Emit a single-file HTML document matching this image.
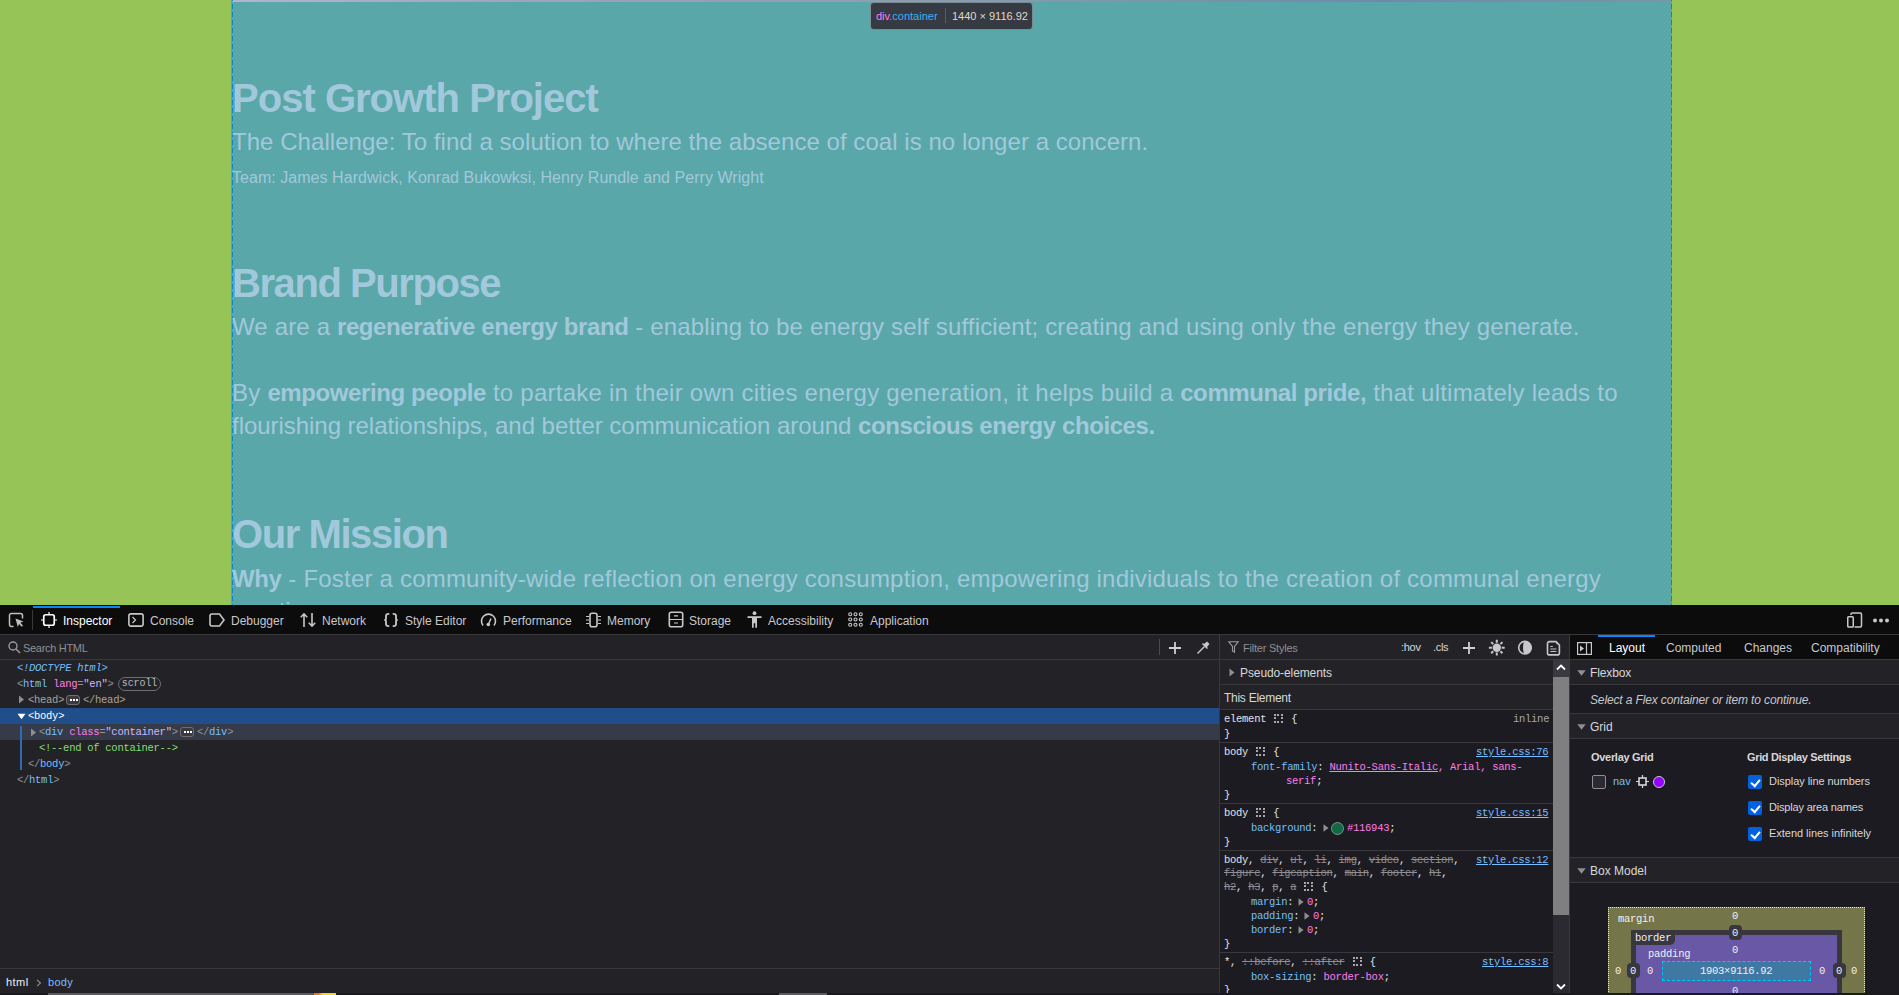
<!DOCTYPE html>
<html lang="en">
<head>
<meta charset="utf-8">
<style>
*{box-sizing:border-box}
html,body{margin:0;padding:0}
body{width:1899px;height:995px;overflow:hidden;position:relative;background:#1c1b22;font-family:"Liberation Sans",sans-serif}
.a{position:absolute;white-space:pre}
#page{position:absolute;left:0;top:0;width:1899px;height:605px;background:#97c457;overflow:hidden}
#cont{position:absolute;left:231px;top:0;width:1441px;height:605px;background:#59a7a8}
#topstrip{position:absolute;left:232px;top:0;width:1439px;height:2px;background:linear-gradient(90deg,#b4b4cc 0%,#a2a4c2 18%,#98a0b6 28%,#8a9cb0 50%,#7892aa 68%,#6e8aa8 80%,#7a94aa 100%)}
.guide{position:absolute;top:0;width:1px;height:605px;background:repeating-linear-gradient(to bottom,#0a84d8 0 1px,transparent 1px 4px,#0a84d8 4px 8px)}
.pg{color:#a2c8dc;font-family:"Liberation Sans",sans-serif}
.pg b{font-weight:700;letter-spacing:-0.4px}
.pg b{}
.h1{font-size:40px;font-weight:700;line-height:46px}
.p24{font-size:24px;line-height:28px}
.p16{font-size:16px;line-height:19px}
#infobar{position:absolute;left:870px;top:2px;width:163px;height:28px;background:#353a43;border:1px solid rgba(200,240,240,0.45);border-radius:4px}

#dt{position:absolute;left:0;top:605px;width:1899px;height:390px;background:#1c1b22}
.tb{position:absolute;left:0;top:0;width:1899px;height:29px;background:#0c0c0d}
.ui{font-family:"Liberation Sans",sans-serif;font-size:12px;line-height:14px;color:#b1b1b3}
.mono{font-family:"Liberation Mono",monospace;font-size:10px;line-height:14px}
.hl{position:absolute;height:1px;background:#38383d}
.vl{position:absolute;width:1px;background:#38383d}
.tab{top:613px;font-size:12px;line-height:16px;color:#c8c8cc;font-family:"Liberation Sans",sans-serif}
.tab.sel{color:#fff}
.mk{font-family:"Liberation Mono",monospace;font-size:10.5px;line-height:16px;letter-spacing:-0.27px;color:#939395}
.pu{color:#939395}.tg{color:#75bfff}.at{color:#ff7de9}.av{color:#d2b8ff}
.badge{font-family:"Liberation Mono",monospace;font-size:10px;line-height:12px;letter-spacing:-0.1px;color:#b8b8bc;border:1px solid #6e6e72;border-radius:7px;text-align:center}
.dots{width:14px;height:10px;border:1px solid #6e6e72;border-radius:3px;background:#3a3a3f}
.dots::after{content:"";position:absolute;left:3px;top:3px;width:2px;height:2px;background:#fff;box-shadow:3px 0 #fff,6px 0 #fff}
.rl{font-family:"Liberation Mono",monospace;font-size:10.5px;line-height:14px;letter-spacing:-0.27px;color:#e3e3e6}
.rl s{color:#8f8f93}
.pn{color:#75bfff}.pv{color:#ff7de9}
.lk{color:#75bfff;text-decoration:underline}
.gi{display:inline-block;width:9px;height:9px;border:2px dotted #a8a8ac;vertical-align:-1px;margin:0 2px}
.cb{width:14px;height:14px;border-radius:2px;background:#0062e0}
.cb::after{content:"";position:absolute;left:3px;top:2px;width:7px;height:4px;border-left:2px solid #fff;border-bottom:2px solid #fff;transform:translate(0,2px) rotate(-50deg)}
.bm{font-family:"Liberation Mono",monospace;font-size:10.5px;line-height:16px;letter-spacing:-0.27px;color:#f0f0f4}
.bbadge{width:13px;height:15px;border-radius:4px;background:#38373d}
</style>
</head>
<body>
<div id="page">
  <div id="cont"></div>
  <div id="topstrip"></div>
  <div class="guide" style="left:232px"></div>
  <div class="guide" style="left:1671px"></div>

  <div class="a pg h1" style="left:232px;top:75px;letter-spacing:-0.98px">Post Growth Project</div>
  <div class="a pg p24" style="left:232px;top:128px;letter-spacing:0.047px">The Challenge: To find a solution to where the absence of coal is no longer a concern.</div>
  <div class="a pg p16" style="left:232px;top:168px;letter-spacing:0.042px">Team: James Hardwick, Konrad Bukowksi, Henry Rundle and Perry Wright</div>

  <div class="a pg h1" style="left:232px;top:260px;letter-spacing:-1.43px">Brand Purpose</div>
  <div class="a pg p24" style="left:232px;top:313px;letter-spacing:0.15px">We are a <b>regenerative energy brand</b> - enabling to be energy self sufficient; creating and using only the energy they generate.</div>
  <div class="a pg p24" style="left:232px;top:379px;letter-spacing:0.242px">By <b>empowering people</b> to partake in their own cities energy generation, it helps build a <b>communal pride,</b> that ultimately leads to</div>
  <div class="a pg p24" style="left:232px;top:412px;letter-spacing:-0.04px">flourishing relationships, and better communication around <b>conscious energy choices.</b></div>

  <div class="a pg h1" style="left:232px;top:511px;letter-spacing:-1.43px">Our Mission</div>
  <div class="a pg p24" style="left:232px;top:565px;letter-spacing:0.205px"><b>Why</b> - Foster a community-wide reflection on energy consumption, empowering individuals to the creation of communal energy</div>
  <div class="a pg p24" style="left:232px;top:597px">practices.</div>

  <div id="infobar"></div>
  <div class="a" style="left:876px;top:10px;font:11px/13px 'Liberation Sans',sans-serif"><span style="color:#ff7de9">div</span><span style="color:#3fb0f0">.container</span></div>
  <div class="a" style="left:945px;top:8px;width:1px;height:15px;background:#5b5e66"></div>
  <div class="a" style="left:952px;top:10px;font:11px/13px 'Liberation Sans',sans-serif;color:#e0d9c8">1440 &#215; 9116.92</div>
</div>

<div id="dt">
  <div class="tb"></div>
  <div class="hl" style="left:0;top:29px;width:1899px"></div>
</div>
<!-- toolbar -->
<div id="toolbar">
  <div class="a" style="left:33px;top:606px;width:87px;height:2px;background:#0a84ff"></div>
  <div class="a" style="left:32px;top:610px;width:1px;height:20px;background:#38383d"></div>
  <!-- pick icon -->
  <svg class="a" style="left:8px;top:612px" width="17" height="16" viewBox="0 0 17 16"><path d="M5.5 14.5H3.5a2 2 0 0 1-2-2V3.5a2 2 0 0 1 2-2h9a2 2 0 0 1 2 2v3" fill="none" stroke="#bfbfc3" stroke-width="1.5"/><path d="M7.5 6.5l8 3-3.2 1.2 2.7 2.8-1.2 1.2-2.8-2.8-1.2 3.2z" fill="#bfbfc3"/></svg>
  <!-- inspector icon -->
  <svg class="a" style="left:41px;top:612px" width="16" height="16" viewBox="0 0 16 16"><rect x="2.75" y="2.75" width="10.5" height="10.5" rx="2" fill="none" stroke="#fff" stroke-width="1.7"/><path d="M8 0v2.5M8 13.5V16M0 8h2.5M13.5 8H16" stroke="#fff" stroke-width="1.2"/></svg>
  <div class="a tab sel" style="left:63px">Inspector</div>
  <svg class="a" style="left:128px;top:613px" width="16" height="14" viewBox="0 0 16 14"><rect x="0.9" y="0.9" width="14.2" height="12.2" rx="2" fill="none" stroke="#c8c8cc" stroke-width="1.6"/><path d="M4.5 4l3 3-3 3" fill="none" stroke="#c8c8cc" stroke-width="1.2"/></svg>
  <div class="a tab" style="left:150px">Console</div>
  <svg class="a" style="left:209px;top:613px" width="16" height="14" viewBox="0 0 16 14"><path d="M1 3a2 2 0 0 1 2-2h7.5l4.5 6-4.5 6H3a2 2 0 0 1-2-2z" fill="none" stroke="#c8c8cc" stroke-width="1.6"/></svg>
  <div class="a tab" style="left:231px">Debugger</div>
  <svg class="a" style="left:300px;top:612px" width="16" height="16" viewBox="0 0 16 16"><path d="M4 15V2M0.8 5.2L4 1.8l3.2 3.4M12 1v13M8.8 10.8l3.2 3.4 3.2-3.4" fill="none" stroke="#c8c8cc" stroke-width="1.6"/></svg>
  <div class="a tab" style="left:322px">Network</div>
  <svg class="a" style="left:380px;top:610px" width="22" height="20" viewBox="0 0 22 20"><path d="M8.6 3.8C7 3.8 6 4.5 6 6V8.4C6 9.3 5.3 9.9 4.3 9.9C5.3 9.9 6 10.5 6 11.4V14C6 15.5 7 16.1 8.6 16.1M13.4 3.8C15 3.8 16 4.5 16 6V8.4C16 9.3 16.7 9.9 17.7 9.9C16.7 9.9 16 10.5 16 11.4V14C16 15.5 15 16.1 13.4 16.1" fill="none" stroke="#c8c8cc" stroke-width="1.8" stroke-linecap="round"/></svg>
  <div class="a tab" style="left:405px">Style Editor</div>
  <svg class="a" style="left:480px;top:612px" width="17" height="16" viewBox="0 0 17 16"><path d="M3 13.5A7 7 0 1 1 14 13.5" fill="none" stroke="#c8c8cc" stroke-width="1.6"/><path d="M8.5 12l2.5-5.5" stroke="#c8c8cc" stroke-width="1.5"/><circle cx="8.3" cy="12.5" r="1.8" fill="#c8c8cc"/></svg>
  <div class="a tab" style="left:503px">Performance</div>
  <svg class="a" style="left:585px;top:612px" width="17" height="16" viewBox="0 0 17 16"><rect x="5" y="1.3" width="7" height="13.4" rx="2" fill="none" stroke="#c8c8cc" stroke-width="1.6"/><path d="M1 4.5h3M1 8h3M1 11.5h3M13 4.5h3M13 8h3M13 11.5h3" stroke="#c8c8cc" stroke-width="1"/></svg>
  <div class="a tab" style="left:607px">Memory</div>
  <svg class="a" style="left:668px;top:611px" width="16" height="17" viewBox="0 0 16 17"><rect x="1.3" y="1.3" width="13.4" height="14.4" rx="2" fill="none" stroke="#c8c8cc" stroke-width="1.6"/><path d="M1.5 8.5h13M6 4.8h4M6 12h4" stroke="#c8c8cc" stroke-width="1.2"/></svg>
  <div class="a tab" style="left:689px">Storage</div>
  <svg class="a" style="left:747px;top:611px" width="15" height="17" viewBox="0 0 15 17"><circle cx="7.5" cy="2.2" r="1.9" fill="#c8c8cc"/><path d="M0.5 5.2h14v1.8h-4.5v9.8H8.3v-4.5H6.7v4.5H5V7H0.5z" fill="#c8c8cc"/></svg>
  <div class="a tab" style="left:768px">Accessibility</div>
  <svg class="a" style="left:848px;top:612px" width="15" height="15" viewBox="0 0 15 15"><g fill="none" stroke="#c8c8cc" stroke-width="1.1"><circle cx="2.2" cy="2.2" r="1.5"/><circle cx="7.5" cy="2.2" r="1.5"/><circle cx="12.8" cy="2.2" r="1.5"/><circle cx="2.2" cy="7.5" r="1.5"/><circle cx="7.5" cy="7.5" r="1.5"/><circle cx="12.8" cy="7.5" r="1.5"/><circle cx="2.2" cy="12.8" r="1.5"/><circle cx="7.5" cy="12.8" r="1.5"/><circle cx="12.8" cy="12.8" r="1.5"/></g></svg>
  <div class="a tab" style="left:870px">Application</div>
  <svg class="a" style="left:1846px;top:611px" width="17" height="18" viewBox="0 0 17 18"><path d="M5 4V3.2A1.2 1.2 0 0 1 6.2 2H14.3A1.2 1.2 0 0 1 15.5 3.2V14.8A1.2 1.2 0 0 1 14.3 16H8.5" fill="none" stroke="#c8c8cc" stroke-width="1.5"/><rect x="1.75" y="5.75" width="5.5" height="10.25" rx="0.8" fill="none" stroke="#c8c8cc" stroke-width="1.5"/></svg>
  <svg class="a" style="left:1871px;top:618px" width="19" height="5" viewBox="0 0 19 5"><circle cx="4" cy="2.5" r="2" fill="#c8c8cc"/><circle cx="10" cy="2.5" r="2" fill="#c8c8cc"/><circle cx="16" cy="2.5" r="2" fill="#c8c8cc"/></svg>
</div>

<!-- markup panel -->
<div class="a" style="left:0;top:635px;width:1219px;height:360px;background:#232327"></div>
<div class="hl" style="left:0;top:659px;width:1219px"></div>
<svg class="a" style="left:8px;top:641px" width="13" height="13" viewBox="0 0 13 13"><circle cx="5" cy="5" r="4" fill="none" stroke="#9a9a9e" stroke-width="1.4"/><path d="M8 8l4 4" stroke="#9a9a9e" stroke-width="1.6"/></svg>
<div class="a ui" style="left:23px;top:641px;color:#8f8f93;font-size:11px;letter-spacing:-0.3px">Search HTML</div>
<div class="vl" style="left:1159px;top:639px;height:16px;background:#4a4a4f"></div>
<svg class="a" style="left:1169px;top:642px" width="13" height="12" viewBox="0 0 13 12"><path d="M6 0v12M0 6h12" stroke="#d0d0d4" stroke-width="1.8"/></svg>
<svg class="a" style="left:1196px;top:641px" width="14" height="14" viewBox="0 0 14 14"><path d="M1.5 12.5l7-7" stroke="#c8c8cc" stroke-width="1.5"/><path d="M8 3l3-2.5 2.5 2.5L11 6l1 1-1 1-5-5 1-1z" fill="#c8c8cc"/></svg>

<div class="a" style="left:0;top:708px;width:1219px;height:16px;background:#204e8a"></div>
<div class="a" style="left:0;top:724px;width:1219px;height:16px;background:#353b48"></div>
<div class="a" style="left:20px;top:726px;width:2px;height:44px;background:#2f6ab3"></div>

<div class="a mk" style="left:17px;top:660px"><i style="color:#75bfff">&lt;!DOCTYPE html&gt;</i></div>
<div class="a mk" style="left:17px;top:676px"><span class="pu">&lt;</span><span class="tg">html</span> <span class="at">lang</span><span class="pu">=</span><span class="av">"en"</span><span class="pu">&gt;</span></div>
<div class="a badge" style="left:118px;top:677px;width:43px;height:14px">scroll</div>
<svg class="a" style="left:18px;top:695px" width="7" height="9" viewBox="0 0 7 9"><path d="M1 0.5l5 4-5 4z" fill="#8f8f93"/></svg>
<div class="a mk" style="left:28px;top:692px;color:#a9a49a">&lt;head&gt;</div>
<div class="a dots" style="left:66px;top:695px"></div>
<div class="a mk" style="left:83px;top:692px;color:#a9a49a">&lt;/head&gt;</div>
<svg class="a" style="left:17px;top:713px" width="9" height="7" viewBox="0 0 9 7"><path d="M0.5 0.8h8l-4 5.4z" fill="#fff"/></svg>
<div class="a mk" style="left:28px;top:708px;color:#fff">&lt;body&gt;</div>
<svg class="a" style="left:30px;top:728px" width="7" height="9" viewBox="0 0 7 9"><path d="M1 0.5l5 4-5 4z" fill="#8f8f93"/></svg>
<div class="a mk" style="left:39px;top:724px"><span class="pu">&lt;</span><span class="tg">div</span> <span class="at">class</span><span class="pu">=</span><span class="av">"container"</span><span class="pu">&gt;</span></div>
<div class="a dots" style="left:180px;top:727px"></div>
<div class="a mk" style="left:197px;top:724px"><span class="pu">&lt;/</span><span class="tg">div</span><span class="pu">&gt;</span></div>
<div class="a mk" style="left:39px;top:740px;color:#86de74">&lt;!--end of container--&gt;</div>
<div class="a mk" style="left:28px;top:756px"><span class="pu">&lt;/</span><span class="tg">body</span><span class="pu">&gt;</span></div>
<div class="a mk" style="left:17px;top:772px"><span class="pu">&lt;/</span><span class="tg">html</span><span class="pu">&gt;</span></div>

<div class="hl" style="left:0;top:968px;width:1219px"></div>
<div class="a ui" style="left:6px;top:975px;color:#f0f0f4;font-size:11px;letter-spacing:0.45px">html</div>
<svg class="a" style="left:36px;top:979px" width="6" height="8" viewBox="0 0 6 8"><path d="M1 0.8l3.5 3.2L1 7.2" fill="none" stroke="#8f8f93" stroke-width="1.1"/></svg>
<div class="a ui" style="left:48px;top:975px;color:#75bfff;font-size:11px;letter-spacing:0.3px">body</div>

<!-- rules panel -->
<div class="vl" style="left:1219px;top:635px;height:360px"></div>
<div class="a" style="left:1220px;top:635px;width:349px;height:360px;background:#1c1b22"></div>
<div class="a" style="left:1220px;top:635px;width:349px;height:24px;background:#232327"></div>
<div class="hl" style="left:1220px;top:659px;width:349px"></div>
<svg class="a" style="left:1228px;top:641px" width="11" height="12" viewBox="0 0 11 12"><path d="M0.8 0.8h9.4L6.5 5.5v5.7L4.5 10V5.5z" fill="none" stroke="#9a9a9e" stroke-width="1.1"/></svg>
<div class="a ui" style="left:1243px;top:641px;color:#8f8f93;font-size:11px;letter-spacing:-0.22px">Filter Styles</div>
<div class="a ui" style="left:1401px;top:640px;color:#d7d7db;font-size:11px;letter-spacing:-0.3px">:hov</div>
<div class="a ui" style="left:1433px;top:640px;color:#d7d7db;font-size:11px;letter-spacing:-0.3px">.cls</div>
<svg class="a" style="left:1463px;top:642px" width="13" height="12" viewBox="0 0 13 12"><path d="M6 0v12M0 6h12" stroke="#d0d0d4" stroke-width="1.8"/></svg>
<svg class="a" style="left:1488px;top:639px" width="18" height="18" viewBox="0 0 18 18"><circle cx="8.8" cy="8.7" r="4.2" fill="#c8c8cc"/><g stroke="#c8c8cc" stroke-width="2"><path d="M8.8 0.8v3M8.8 13.6v3M0.9 8.7h3M13.7 8.7h3M3.2 3.1l2 2M12.4 12.3l2 2M3.2 14.3l2-2M12.4 5.1l2-2"/></g></svg>
<svg class="a" style="left:1517px;top:640px" width="16" height="16" viewBox="0 0 16 16"><circle cx="8" cy="7.7" r="6.3" fill="none" stroke="#c8c8cc" stroke-width="1.6"/><path d="M8 1.4A6.3 6.3 0 0 1 8 14A2 6.3 0 0 1 8 1.4z" fill="#c8c8cc"/></svg>
<svg class="a" style="left:1546px;top:640px" width="15" height="16" viewBox="0 0 15 16"><path d="M3.5 1.6h6.5l3.4 3.4v7.9a2 2 0 0 1-2 2H3.5a2 2 0 0 1-2-2V3.6a2 2 0 0 1 2-2z" fill="none" stroke="#c8c8cc" stroke-width="1.6"/><circle cx="11.3" cy="3.4" r="0.9" fill="#c8c8cc"/><path d="M4.4 6.5h2.4M4.4 9h6M4.4 11.5h6" stroke="#c8c8cc" stroke-width="1"/></svg>

<div class="a" style="left:1220px;top:660px;width:333px;height:49px;background:#232327"></div>
<div class="hl" style="left:1220px;top:684px;width:333px"></div>
<div class="hl" style="left:1220px;top:709px;width:333px"></div>
<svg class="a" style="left:1229px;top:668px" width="6" height="9" viewBox="0 0 6 9"><path d="M0.5 0.5l5 4-5 4z" fill="#8f8f93"/></svg>
<div class="a ui" style="left:1240px;top:666px;color:#d7d7db;letter-spacing:-0.1px">Pseudo-elements</div>
<div class="a ui" style="left:1224px;top:691px;color:#d7d7db;letter-spacing:-0.27px">This Element</div>

<div class="a rl" style="left:1224px;top:712px">element <span class="gi"></span> {</div>
<div class="a rl" style="left:1513px;top:712px;color:#a8a8ac">inline</div>
<div class="a rl" style="left:1224px;top:727px">}</div>
<div class="hl" style="left:1220px;top:742px;width:333px"></div>

<div class="a rl" style="left:1224px;top:745px">body <span class="gi"></span> {</div>
<div class="a rl lk" style="left:1476px;top:745px">style.css:76</div>
<div class="a rl" style="left:1251px;top:760px"><span class="pn">font-family</span>: <span class="pv" style="text-decoration:underline">Nunito-Sans-Italic</span><span class="pv">, Arial, sans-</span></div>
<div class="a rl" style="left:1286px;top:774px"><span class="pv">serif</span>;</div>
<div class="a rl" style="left:1224px;top:788px">}</div>
<div class="hl" style="left:1220px;top:803px;width:333px"></div>

<div class="a rl" style="left:1224px;top:806px">body <span class="gi"></span> {</div>
<div class="a rl lk" style="left:1476px;top:806px">style.css:15</div>
<div class="a rl" style="left:1251px;top:821px"><span class="pn">background</span>:</div>
<svg class="a" style="left:1323px;top:824px" width="6" height="8" viewBox="0 0 6 8"><path d="M0.5 0.3l5 3.7-5 3.7z" fill="#8f8f93"/></svg>
<div class="a" style="left:1331px;top:822px;width:13px;height:13px;border-radius:50%;background:#116943;border:1px solid #8a8a8e"></div>
<div class="a rl" style="left:1347px;top:821px"><span class="pv">#116943</span>;</div>
<div class="a rl" style="left:1224px;top:835px">}</div>
<div class="hl" style="left:1220px;top:850px;width:333px"></div>

<div class="a rl" style="left:1224px;top:853px">body, <s>div</s>, <s>ul</s>, <s>li</s>, <s>img</s>, <s>video</s>, <s>section</s>,</div>
<div class="a rl lk" style="left:1476px;top:853px">style.css:12</div>
<div class="a rl" style="left:1224px;top:866px"><s>figure</s>, <s>figcaption</s>, <s>main</s>, <s>footer</s>, <s>h1</s>,</div>
<div class="a rl" style="left:1224px;top:880px"><s>h2</s>, <s>h3</s>, <s>p</s>, <s>a</s> <span class="gi"></span> {</div>
<div class="a rl" style="left:1251px;top:895px"><span class="pn">margin</span>:</div>
<svg class="a" style="left:1298px;top:898px" width="6" height="8" viewBox="0 0 6 8"><path d="M0.5 0.3l5 3.7-5 3.7z" fill="#8f8f93"/></svg>
<div class="a rl" style="left:1307px;top:895px"><span class="pv">0</span>;</div>
<div class="a rl" style="left:1251px;top:909px"><span class="pn">padding</span>:</div>
<svg class="a" style="left:1304px;top:912px" width="6" height="8" viewBox="0 0 6 8"><path d="M0.5 0.3l5 3.7-5 3.7z" fill="#8f8f93"/></svg>
<div class="a rl" style="left:1313px;top:909px"><span class="pv">0</span>;</div>
<div class="a rl" style="left:1251px;top:923px"><span class="pn">border</span>:</div>
<svg class="a" style="left:1298px;top:926px" width="6" height="8" viewBox="0 0 6 8"><path d="M0.5 0.3l5 3.7-5 3.7z" fill="#8f8f93"/></svg>
<div class="a rl" style="left:1307px;top:923px"><span class="pv">0</span>;</div>
<div class="a rl" style="left:1224px;top:937px">}</div>
<div class="hl" style="left:1220px;top:952px;width:333px"></div>

<div class="a rl" style="left:1224px;top:955px">*, <s>::before</s>, <s>::after</s> <span class="gi"></span> {</div>
<div class="a rl lk" style="left:1482px;top:955px">style.css:8</div>
<div class="a rl" style="left:1251px;top:970px"><span class="pn">box-sizing</span>: <span class="pv">border-box</span>;</div>
<div class="a rl" style="left:1224px;top:983px">}</div>

<!-- rules scrollbar -->
<div class="a" style="left:1553px;top:660px;width:16px;height:335px;background:#2b2a30"></div>
<div class="a" style="left:1553px;top:660px;width:16px;height:17px;background:#3a3940"></div>
<div class="a" style="left:1553px;top:677px;width:16px;height:238px;background:#7f7f81"></div>
<svg class="a" style="left:1556px;top:664px" width="10" height="7" viewBox="0 0 10 7"><path d="M1 5.5l4-4 4 4" fill="none" stroke="#fff" stroke-width="1.8"/></svg>
<svg class="a" style="left:1556px;top:983px" width="10" height="7" viewBox="0 0 10 7"><path d="M1 1.5l4 4 4-4" fill="none" stroke="#fff" stroke-width="1.8"/></svg>

<!-- layout sidebar -->
<div class="vl" style="left:1569px;top:635px;height:360px"></div>
<div class="a" style="left:1570px;top:635px;width:329px;height:360px;background:#1c1b22"></div>
<div class="a" style="left:1570px;top:635px;width:329px;height:24px;background:#0c0c0d"></div>
<div class="hl" style="left:1570px;top:659px;width:329px"></div>
<div class="a" style="left:1598px;top:635px;width:57px;height:2px;background:#0a84ff"></div>
<svg class="a" style="left:1577px;top:642px" width="15" height="13" viewBox="0 0 15 13"><rect x="0.6" y="0.6" width="13.8" height="11.8" fill="none" stroke="#c8c8cc" stroke-width="1.2"/><path d="M9.5 1v11" stroke="#c8c8cc" stroke-width="1.2"/><path d="M3 3.5l4 3-4 3z" fill="#c8c8cc"/></svg>
<div class="a ui" style="left:1609px;top:641px;color:#fff">Layout</div>
<div class="a ui" style="left:1666px;top:641px;color:#c8c8cc">Computed</div>
<div class="a ui" style="left:1744px;top:641px;color:#c8c8cc">Changes</div>
<div class="a ui" style="left:1811px;top:641px;color:#c8c8cc">Compatibility</div>

<div class="a" style="left:1570px;top:660px;width:329px;height:24px;background:#232327"></div>
<div class="hl" style="left:1570px;top:684px;width:329px"></div>
<svg class="a" style="left:1577px;top:670px" width="9" height="6" viewBox="0 0 9 6"><path d="M0.3 0.3h8.4L4.5 5.7z" fill="#8f8f93"/></svg>
<div class="a ui" style="left:1590px;top:666px;color:#d7d7db;letter-spacing:-0.13px">Flexbox</div>
<div class="a ui" style="left:1590px;top:693px;color:#c8c8cc;font-style:italic;letter-spacing:-0.135px">Select a Flex container or item to continue.</div>
<div class="hl" style="left:1570px;top:713px;width:329px"></div>
<div class="a" style="left:1570px;top:714px;width:329px;height:24px;background:#232327"></div>
<div class="hl" style="left:1570px;top:738px;width:329px"></div>
<svg class="a" style="left:1577px;top:724px" width="9" height="6" viewBox="0 0 9 6"><path d="M0.3 0.3h8.4L4.5 5.7z" fill="#8f8f93"/></svg>
<div class="a ui" style="left:1590px;top:720px;color:#d7d7db">Grid</div>

<div class="a ui" style="left:1591px;top:750px;color:#d7d7db;font-weight:700;font-size:11px;letter-spacing:-0.3px">Overlay Grid</div>
<div class="a ui" style="left:1747px;top:750px;color:#d7d7db;font-weight:700;font-size:11px;letter-spacing:-0.35px">Grid Display Settings</div>
<div class="a" style="left:1592px;top:775px;width:14px;height:14px;border:1px solid #8f8f93;border-radius:2px;background:#2b2a33"></div>
<div class="a ui" style="left:1613px;top:774px;color:#75bfff;font-size:11px">nav</div>
<svg class="a" style="left:1636px;top:775px" width="13" height="13" viewBox="0 0 13 13"><rect x="3" y="3" width="7" height="7" fill="none" stroke="#d7d7db" stroke-width="1.6"/><path d="M6.5 0v3M6.5 10v3M0 6.5h3M10 6.5h3" stroke="#d7d7db" stroke-width="1.2"/></svg>
<div class="a" style="left:1653px;top:776px;width:12px;height:12px;border-radius:50%;background:#9400ff;border:1px solid #c9c9cd"></div>
<div class="a cb" style="left:1748px;top:775px"></div>
<div class="a ui" style="left:1769px;top:774px;color:#d7d7db;font-size:11px;letter-spacing:-0.06px">Display line numbers</div>
<div class="a cb" style="left:1748px;top:801px"></div>
<div class="a ui" style="left:1769px;top:800px;color:#d7d7db;font-size:11px;letter-spacing:-0.18px">Display area names</div>
<div class="a cb" style="left:1748px;top:827px"></div>
<div class="a ui" style="left:1769px;top:826px;color:#d7d7db;font-size:11px;letter-spacing:-0.03px">Extend lines infinitely</div>

<div class="hl" style="left:1570px;top:857px;width:329px"></div>
<div class="a" style="left:1570px;top:858px;width:329px;height:24px;background:#232327"></div>
<div class="hl" style="left:1570px;top:882px;width:329px"></div>
<svg class="a" style="left:1577px;top:868px" width="9" height="6" viewBox="0 0 9 6"><path d="M0.3 0.3h8.4L4.5 5.7z" fill="#8f8f93"/></svg>
<div class="a ui" style="left:1590px;top:864px;color:#d7d7db">Box Model</div>

<!-- box model -->
<div class="a" style="left:1608px;top:907px;width:257px;height:95px;background:#75754a;border:1px dotted #ffff00"></div>
<div class="a" style="left:1631px;top:930px;width:211px;height:70px;background:#6858a5;border:5px solid #38373d;border-bottom:0"></div>
<div class="a" style="left:1631px;top:930px;width:44px;height:15px;background:#38373d;border-radius:0 0 5px 0"></div>
<div class="a" style="left:1662px;top:961px;width:149px;height:20px;background:#3f78a3;border:1px dashed #00c8ff"></div>
<div class="a bm" style="left:1618px;top:911px">margin</div>
<div class="a bm" style="left:1635px;top:930px">border</div>
<div class="a bm" style="left:1648px;top:946px">padding</div>
<div class="a bm" style="left:1732px;top:908px">0</div>
<div class="a bbadge" style="left:1729px;top:925px"></div>
<div class="a bm" style="left:1732px;top:925px">0</div>
<div class="a bm" style="left:1732px;top:942px">0</div>
<div class="a bm" style="left:1700px;top:963px">1903&#215;9116.92</div>
<div class="a bm" style="left:1615px;top:963px">0</div>
<div class="a bbadge" style="left:1627px;top:963px"></div>
<div class="a bm" style="left:1630px;top:963px">0</div>
<div class="a bm" style="left:1647px;top:963px">0</div>
<div class="a bm" style="left:1819px;top:963px">0</div>
<div class="a bbadge" style="left:1833px;top:963px"></div>
<div class="a bm" style="left:1836px;top:963px">0</div>
<div class="a bm" style="left:1851px;top:963px">0</div>
<div class="a bm" style="left:1732px;top:983px">0</div>

<!-- bottom strip -->
<div class="a" style="left:0;top:993px;width:1899px;height:2px;background:#1a1a1e"></div>
<div class="a" style="left:48px;top:993px;width:266px;height:2px;background:#5a5a5e"></div>
<div class="a" style="left:314px;top:993px;width:22px;height:2px;background:linear-gradient(90deg,#e8780c 20%,#ffd02c 40%)"></div>
<div class="a" style="left:779px;top:993px;width:48px;height:2px;background:#5a5a5e"></div>
</body>
</html>
